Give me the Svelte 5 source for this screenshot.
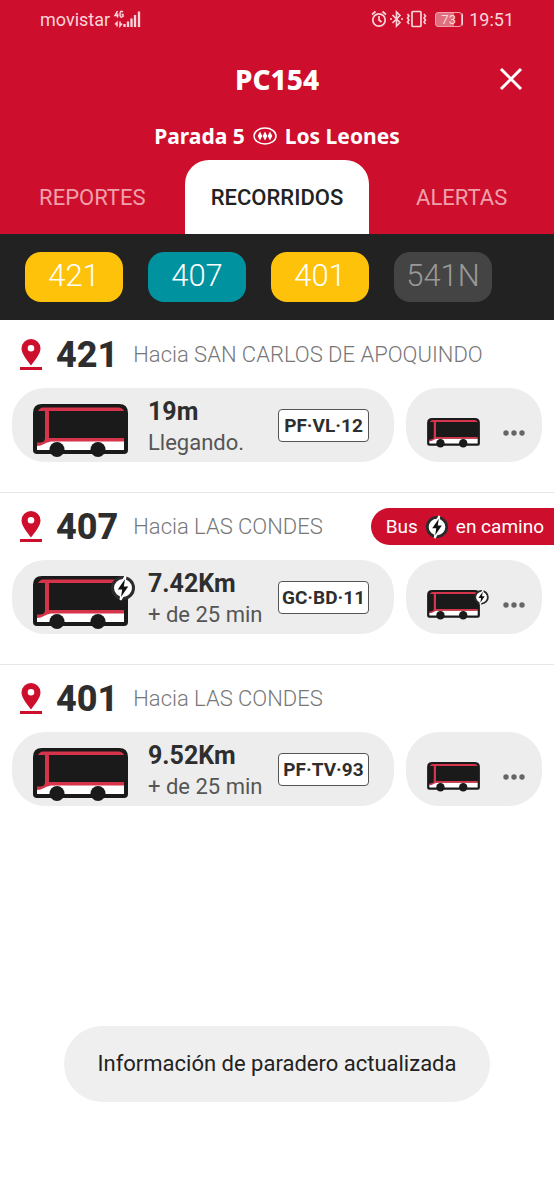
<script>
	const tabs = ["REPORTES", "RECORRIDOS", "ALERTAS"];

	const chips = [
		{ name: "421", color: "yellow" },
		{ name: "407", color: "teal" },
		{ name: "401", color: "yellow" },
		{ name: "541N", color: "off" }
	];

	const routes = [
		{ name: "421", to: "SAN CARLOS DE APOQUINDO", distance: "19m", eta: "Llegando.", plate: "PF·VL·12", electric: false },
		{ name: "407", to: "LAS CONDES", distance: "7.42Km", eta: "+ de 25 min", plate: "GC·BD·11", electric: true },
		{ name: "401", to: "LAS CONDES", distance: "9.52Km", eta: "+ de 25 min", plate: "PF·TV·93", electric: false }
	];

	let active = $state("RECORRIDOS");
</script>

{#snippet bolt(cx, cy, r)}
	<g transform="translate({cx} {cy}) scale({r / 12})">
		<circle r="10.5" fill="#fff" stroke="#2b2b2d" stroke-width="3" />
		<path d="M2.5-12 L-5 1.5 H-1 L-2.5 12 L5-1.5 H1 Z" fill="#fff" stroke="#fff" stroke-width="2" />
		<path d="M2-9 L-5.2 1.4 H-.8 L-2 9 L5.2-1.6 H.8 Z" fill="#111" />
	</g>
{/snippet}

{#snippet bus(electric, small)}
	<svg class={small ? "bus-small" : "bus"} viewBox="0 0 95 54" aria-hidden="true">
		<path d="M9 0 H86 Q95 0 95 9 V46 Q95 50 91 50 H4 Q0 50 0 46 V9 Q0 0 9 0Z" fill="#1a1a1b" />
		<path d="M4 41 L13 37 H91 V46 H4Z" fill="#fff" />
		<path d="M5 7 Q7 3.5 10 3.5 H86 Q90 4 91 7 H16 V34 H91 V37.5 H18 Q14 38 11 40 Q8 42 4 42 V38.5 H8 Q12 38 12 34 V7Z" fill="#d5344b" />
		<circle cx="24" cy="45.5" r="7.5" fill="#1a1a1b" />
		<circle cx="65" cy="45.5" r="7.5" fill="#1a1a1b" />
		{#if electric}
			{#if small}
				{@render bolt(98, 13, 13)}
			{:else}
				{@render bolt(90, 12, 12)}
			{/if}
		{/if}
	</svg>
{/snippet}

<div class="app">
	<header>
		<div class="status">
			<div class="carrier">
				<span>movistar</span>
				<svg width="27" height="18" viewBox="0 0 27 18" fill="none" stroke="currentColor" aria-hidden="true">
					<path d="M3.5 1 L1 5.5 H4.5 M3.5 3.5 V7.5 M9 2 Q6 0 6 4.2 Q6 8.5 9 6.5 V4.5 H7.5" stroke-width="1.5" />
					<path d="M3 16.5 V12.5 L1 14.5 M6 11.5 V16 L8 13.5" stroke-width="1.5" />
					<path d="M10.5 14 V17 M14 11.5 V17 M17.5 8.5 V17 M21 5 V17 M25 1.5 V17" stroke-width="2.3" />
				</svg>
			</div>
			<div class="system">
				<svg width="16" height="18" viewBox="0 0 16 18" fill="none" stroke="currentColor" stroke-width="1.7" aria-hidden="true">
					<circle cx="8" cy="10" r="6.2" />
					<path d="M8 6 V10 L10.5 12 M1 4.5 L4.5 1.5 M15 4.5 L11.5 1.5" />
				</svg>
				<svg width="13" height="18" viewBox="0 0 13 18" fill="none" stroke="currentColor" stroke-width="1.6" aria-hidden="true">
					<path d="M2.5 5 L10 12.5 L6.5 16 V2 L10 5.5 L2.5 13 M0 9 H2 M11 9 H13" />
				</svg>
				<svg width="21" height="18" viewBox="0 0 21 18" fill="none" stroke="currentColor" stroke-width="1.7" aria-hidden="true">
					<rect x="6" y="1.5" width="9" height="15" rx="1" />
					<path d="M1.500 4 L3 6 L1.500 8 L3 10 L1.500 12 L3 14 M18 4 L19.500 6 L18 8 L19.500 10 L18 12 L19.500 14" stroke-width="1.6" />
				</svg>
				<span class="battery">73</span>
				<span>19:51</span>
			</div>
		</div>

		<div class="title">
			<h1>PC154</h1>
			<button class="close" aria-label="Cerrar">
				<svg width="22" height="22" viewBox="0 0 22 22" fill="none" stroke="currentColor" stroke-width="3" aria-hidden="true">
					<path d="M1 1 L21 21 M21 1 L1 21" />
				</svg>
			</button>
		</div>

		<p class="stop">
			<span>Parada 5</span>
			<svg width="24" height="18" viewBox="0 0 24 18" aria-hidden="true">
				<ellipse cx="12" cy="9" rx="11" ry="8" fill="none" stroke="#fff" stroke-width="1.5" />
				<path d="M7 4.5 L9.3 9 L7 13.5 L4.7 9Z M12 4.5 L14.3 9 L12 13.5 L9.7 9Z M17 4.5 L19.3 9 L17 13.5 L14.7 9Z" fill="#fff" />
			</svg>
			<span>Los Leones</span>
		</p>

		<nav class="tabs">
			{#each tabs as tab}
				<button class:active={active === tab} onclick={() => (active = tab)}>{tab}</button>
			{/each}
		</nav>
	</header>

	<div class="chips">
		{#each chips as chip}
			<button class={"chip " + chip.color}>{chip.name}</button>
		{/each}
	</div>

	<main>
		{#each routes as route}
			<section>
				<div class="head">
					<svg width="22" height="32" viewBox="0 0 22 32" fill="#cd0f2d" aria-hidden="true">
						<path fill-rule="evenodd" d="M11 0 A9.5 9.5 0 0 1 20.5 9.5 C20.5 15 15 21 11 26.5 C7 21 1.5 15 1.5 9.5 A9.5 9.5 0 0 1 11 0Z M11 6 A3.3 3.3 0 1 0 11 12.6 A3.3 3.3 0 1 0 11 6Z" />
						<rect y="28" width="22" height="3" />
					</svg>
					<h2>{route.name}</h2>
					<span class="to">Hacia {route.to}</span>
					{#if route.electric}
						<span class="ribbon">
							Bus
							<svg width="24" height="24" viewBox="-13 -13 26 26" aria-hidden="true">{@render bolt(0, 0, 12)}</svg>
							en camino
						</span>
					{/if}
				</div>
				<div class="row">
					<button class="card">
						{@render bus(route.electric, false)}
						<span class="info">
							<strong>{route.distance}</strong>
							<span>{route.eta}</span>
						</span>
						<span class="plate">{route.plate}</span>
					</button>
					<button class="card more" aria-label="Más buses">
						{@render bus(route.electric, true)}
						<svg width="22" height="6" viewBox="0 0 22 6" fill="#666" aria-hidden="true">
							<circle cx="3" cy="3" r="2.7" />
							<circle cx="11" cy="3" r="2.7" />
							<circle cx="19" cy="3" r="2.7" />
						</svg>
					</button>
				</div>
			</section>
		{/each}
	</main>

	<div class="toast" role="status">Información de paradero actualizada</div>
</div>

<style>
	:global(body) {
		margin: 0;
		background: #fff;
	}

	.app {
		min-height: 100vh;
		font-family: Roboto, "Liberation Sans", sans-serif;
		color: #2e2e2e;
	}

	button {
		border: 0;
		padding: 0;
		font: inherit;
		color: inherit;
		background: none;
		cursor: pointer;
	}

	h1, h2, p {
		margin: 0;
	}

	svg {
		display: block;
		flex: none;
		overflow: visible;
	}

	header {
		background: #cd0f2d;
		color: #fff;
	}

	.status {
		display: flex;
		justify-content: space-between;
		height: 38px;
		padding: 0 40px;
		font-size: 18px;
		color: #fbd5d9;
	}

	.carrier, .system {
		display: flex;
		align-items: center;
		gap: 4px;
	}

	.system {
		gap: 3px;
	}

	.battery {
		box-sizing: border-box;
		width: 27px;
		margin: 0 4px 0 5px;
		border: 1px solid #f0a0aa;
		border-radius: 3px;
		box-shadow: 2px 0 0 -1px #fbd5d9;
		background: linear-gradient(90deg, #e0707f 73%, transparent 73%);
		font-size: 13px;
		line-height: 13px;
		text-align: center;
	}

	.title {
		display: grid;
		grid-template-columns: 1fr auto 1fr;
		align-items: center;
		height: 82px;
		padding: 0 32px;
	}

	.title h1 {
		grid-column: 2;
		font: 800 28px/36px "Noto Sans", sans-serif;
	}

	.close {
		justify-self: end;
	}

	.stop {
		display: flex;
		align-items: center;
		justify-content: center;
		gap: 8px;
		height: 32px;
		padding-bottom: 8px;
		font: 700 21px/32px "Noto Sans", sans-serif;
	}

	.tabs {
		display: grid;
		grid-template-columns: repeat(3, 1fr);
	}

	.tabs button {
		height: 74px;
		font-size: 22px;
		color: #f0a0aa;
	}

	.tabs .active {
		border-radius: 24px 24px 0 0;
		background: #fff;
		color: #222;
		font-weight: 500;
	}

	.chips {
		display: flex;
		gap: 25px;
		padding: 18px 25px;
		background: #222;
	}

	.chip {
		width: 98px;
		height: 50px;
		padding-bottom: 4px;
		border-radius: 16px;
		color: #fff;
		font-size: 31px;
		font-weight: 300;
	}

	.yellow {
		background: #ffc20a;
	}

	.teal {
		background: #00929f;
	}

	.off {
		background: #444;
		color: #999;
	}

	main {
		padding-top: 1px;
	}

	section {
		padding-bottom: 30px;
		border-bottom: 1px solid #e6e6e6;
	}

	section:last-child {
		border: 0;
	}

	.head {
		display: flex;
		align-items: center;
		height: 67px;
		padding-left: 20px;
	}

	h2 {
		margin: 0 15px 0 14px;
		font-size: 36px;
		font-weight: 800;
	}

	.to {
		font-size: 22px;
		font-weight: 300;
		color: #777;
	}

	.ribbon {
		display: flex;
		align-items: center;
		gap: 7px;
		height: 37px;
		margin-left: auto;
		padding: 0 10px 0 15px;
		border-radius: 19px 0 0 19px;
		background: #cd0f2d;
		color: #fff;
		font-size: 19px;
	}

	.row {
		display: grid;
		grid-template-columns: 1fr 136px;
		gap: 12px;
		padding: 0 12px;
	}

	.card {
		display: flex;
		align-items: flex-end;
		height: 74px;
		padding: 4px 25px 4px 21px;
		border-radius: 33px;
		background: #ededed;
		text-align: left;
	}

	.bus {
		width: 95px;
		height: 54px;
	}

	.bus-small {
		width: 53px;
		height: 30px;
	}

	.info {
		margin-left: 20px;
		font-size: 22px;
		line-height: 31px;
		color: #555;
	}

	.info strong {
		display: block;
		font-size: 25px;
		color: #2e2e2e;
	}

	.plate {
		box-sizing: border-box;
		align-self: center;
		width: 91px;
		margin-left: auto;
		border: 1px solid #555;
		border-radius: 4px;
		background: #fff;
		font-size: 19px;
		font-weight: 700;
		line-height: 31px;
		text-align: center;
	}

	.more {
		align-items: center;
		justify-content: space-between;
		padding: 16px 17px 0 21px;
	}

	.toast {
		position: fixed;
		right: 64px;
		bottom: 98px;
		left: 64px;
		border-radius: 38px;
		background: #efefef;
		color: #222;
		font-size: 22px;
		line-height: 76px;
		text-align: center;
	}
</style>
